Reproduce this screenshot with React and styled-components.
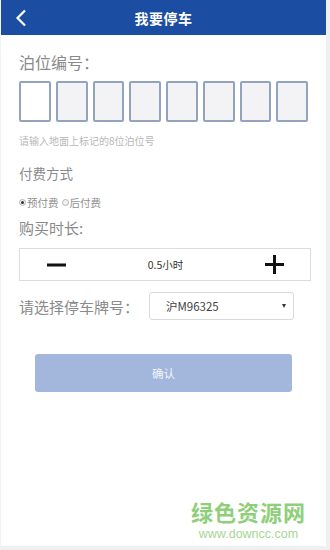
import React, { useState } from 'react';
import styled, { createGlobalStyle } from 'styled-components';

const GlobalStyle = createGlobalStyle`
  html, body {
    margin: 0;
    padding: 0;
    background: #ffffff;
  }
  * {
    box-sizing: border-box;
  }
  body {
    font-family: "Noto Sans CJK SC", "Noto Sans", sans-serif;
  }
`;

const Page = styled.div`
  position: relative;
  width: 330px;
  height: 550px;
  background: #fff;
  border-right: 4px solid #f0f0f0;
  border-bottom: 4px solid #f0f0f0;
  border-left: 1px solid #f2f2f2;
  overflow: hidden;
`;

const Header = styled.header`
  position: relative;
  height: 35px;
  background: #1b4ea2;
  display: flex;
  align-items: center;
  justify-content: center;
`;

const BackButton = styled.button`
  position: absolute;
  left: 10px;
  top: 8px;
  width: 20px;
  height: 20px;
  padding: 0;
  border: 0;
  background: transparent;
  display: flex;
  align-items: center;
  justify-content: center;
`;

const Title = styled.h1`
  margin: 0;
  color: #fff;
  font-size: 14px;
  font-weight: 700;
  letter-spacing: 0.5px;
`;

const Body = styled.main`
  padding: 19px 18px 0 18px;
  display: flex;
  flex-direction: column;
`;

const Label = styled.div`
  color: ${(p) => p.color || '#8a8a8a'};
  font-size: ${(p) => p.size || 15}px;
  line-height: 1;
  margin-top: ${(p) => p.top || 0}px;
`;

const CodeRow = styled.div`
  display: flex;
  gap: 5px;
  margin-top: 11px;
`;

const CodeBox = styled.div`
  width: 32px;
  height: 41px;
  border: 2px solid #93a2bd;
  border-radius: 2px;
  background: ${(p) => (p.active ? '#ffffff' : '#f3f3f5')};
`;

const Hint = styled.div`
  margin-top: 14px;
  color: #b8b8b8;
  font-size: 10px;
  line-height: 1;
`;

const RadioRow = styled.div`
  display: flex;
  align-items: center;
  margin-top: 17px;
  color: #8f8f8f;
  font-size: 10.5px;
  line-height: 1;
`;

const RadioItem = styled.label`
  display: flex;
  align-items: center;
  margin-right: 3px;
`;

const RadioDot = styled.span`
  width: 7px;
  height: 7px;
  border-radius: 50%;
  border: 1px solid #b5b5b5;
  background: #f2f2f2;
  display: inline-flex;
  align-items: center;
  justify-content: center;
  margin-right: 1px;

  &::after {
    content: '';
    width: 3px;
    height: 3px;
    border-radius: 50%;
    background: ${(p) => (p.checked ? '#333' : 'transparent')};
  }
`;

const Stepper = styled.div`
  margin-top: 13px;
  height: 33px;
  border: 1px solid #dcdcdc;
  display: flex;
  align-items: center;
  justify-content: space-between;
  padding: 0 25px 0 26px;
  width: 292px;
`;

const StepButton = styled.button`
  width: 20px;
  height: 20px;
  padding: 0;
  border: 0;
  background: transparent;
  display: flex;
  align-items: center;
  justify-content: center;
`;

const StepValue = styled.span`
  color: #333;
  font-size: 10.5px;
`;

const PlateRow = styled.div`
  display: flex;
  align-items: center;
  margin-top: 11px;
`;

const PlateLabel = styled.span`
  color: #8a8a8a;
  font-size: 15px;
  line-height: 1;
  width: 130px;
`;

const PlateSelect = styled.div`
  width: 145px;
  height: 28px;
  border: 1px solid #d9d9d9;
  border-radius: 3px;
  display: flex;
  align-items: center;
  justify-content: space-between;
  padding: 0 7px 0 16px;
  color: #444;
  font-size: 11.5px;
`;

const Caret = styled.span`
  width: 0;
  height: 0;
  border-left: 2.5px solid transparent;
  border-right: 2.5px solid transparent;
  border-top: 4px solid #333;
`;

const ConfirmButton = styled.button`
  margin: 34px 16px 0 16px;
  height: 38px;
  border: 0;
  border-radius: 3px;
  background: #a3b7dd;
  color: #f2f5fb;
  font-size: 11.5px;
  font-family: inherit;
`;

const Watermark = styled.div`
  position: absolute;
  right: 20px;
  bottom: 5px;
  display: flex;
  flex-direction: column;
  align-items: center;
  color: #8fcf7a;
  pointer-events: none;
`;

const WatermarkTitle = styled.span`
  display: block;
  font-size: 22px;
  font-weight: 700;
  letter-spacing: 1px;
  line-height: 32px;
`;

const WatermarkUrl = styled.span`
  display: block;
  font-family: "Liberation Sans", Arial, sans-serif;
  font-size: 12.5px;
  color: #a6d694;
  line-height: 14px;
`;

export default function App() {
  const [hours, setHours] = useState(0.5);
  const [pay, setPay] = useState('pre');

  return (
    <>
      <GlobalStyle />
      <Page>
        <Header>
          <BackButton aria-label="返回">
            <svg width="12" height="18" viewBox="0 0 12 18">
              <path d="M10 1.5 L2.5 9 L10 16.5" fill="none" stroke="#fff" strokeWidth="2.2" />
            </svg>
          </BackButton>
          <Title>我要停车</Title>
        </Header>
        <Body>
          <Label size={16}>泊位编号：</Label>
          <CodeRow>
            {Array.from({ length: 8 }).map((_, i) => (
              <CodeBox key={i} active={i === 0} />
            ))}
          </CodeRow>
          <Hint>请输入地面上标记的8位泊位号</Hint>

          <Label size={13.5} top={21}>付费方式</Label>
          <RadioRow>
            <RadioItem onClick={() => setPay('pre')}>
              <RadioDot checked={pay === 'pre'} />预付费
            </RadioItem>
            <RadioItem onClick={() => setPay('post')}>
              <RadioDot checked={pay === 'post'} />后付费
            </RadioItem>
          </RadioRow>

          <Label size={15} top={12}>购买时长:</Label>
          <Stepper>
            <StepButton aria-label="减少" onClick={() => setHours(Math.max(0.5, hours - 0.5))}>
              <svg width="19" height="4" viewBox="0 0 19 4">
                <rect x="0" y="0.5" width="19" height="3" fill="#111" />
              </svg>
            </StepButton>
            <StepValue>{hours}小时</StepValue>
            <StepButton aria-label="增加" onClick={() => setHours(hours + 0.5)}>
              <svg width="19" height="19" viewBox="0 0 19 19">
                <rect x="0" y="8" width="19" height="3" fill="#111" />
                <rect x="8" y="0" width="3" height="19" fill="#111" />
              </svg>
            </StepButton>
          </Stepper>

          <PlateRow>
            <PlateLabel>请选择停车牌号：</PlateLabel>
            <PlateSelect>
              <span>沪M96325</span>
              <Caret />
            </PlateSelect>
          </PlateRow>

          <ConfirmButton>确认</ConfirmButton>
        </Body>
        <Watermark>
          <WatermarkTitle>绿色资源网</WatermarkTitle>
          <WatermarkUrl>www.downcc.com</WatermarkUrl>
        </Watermark>
      </Page>
    </>
  );
}
